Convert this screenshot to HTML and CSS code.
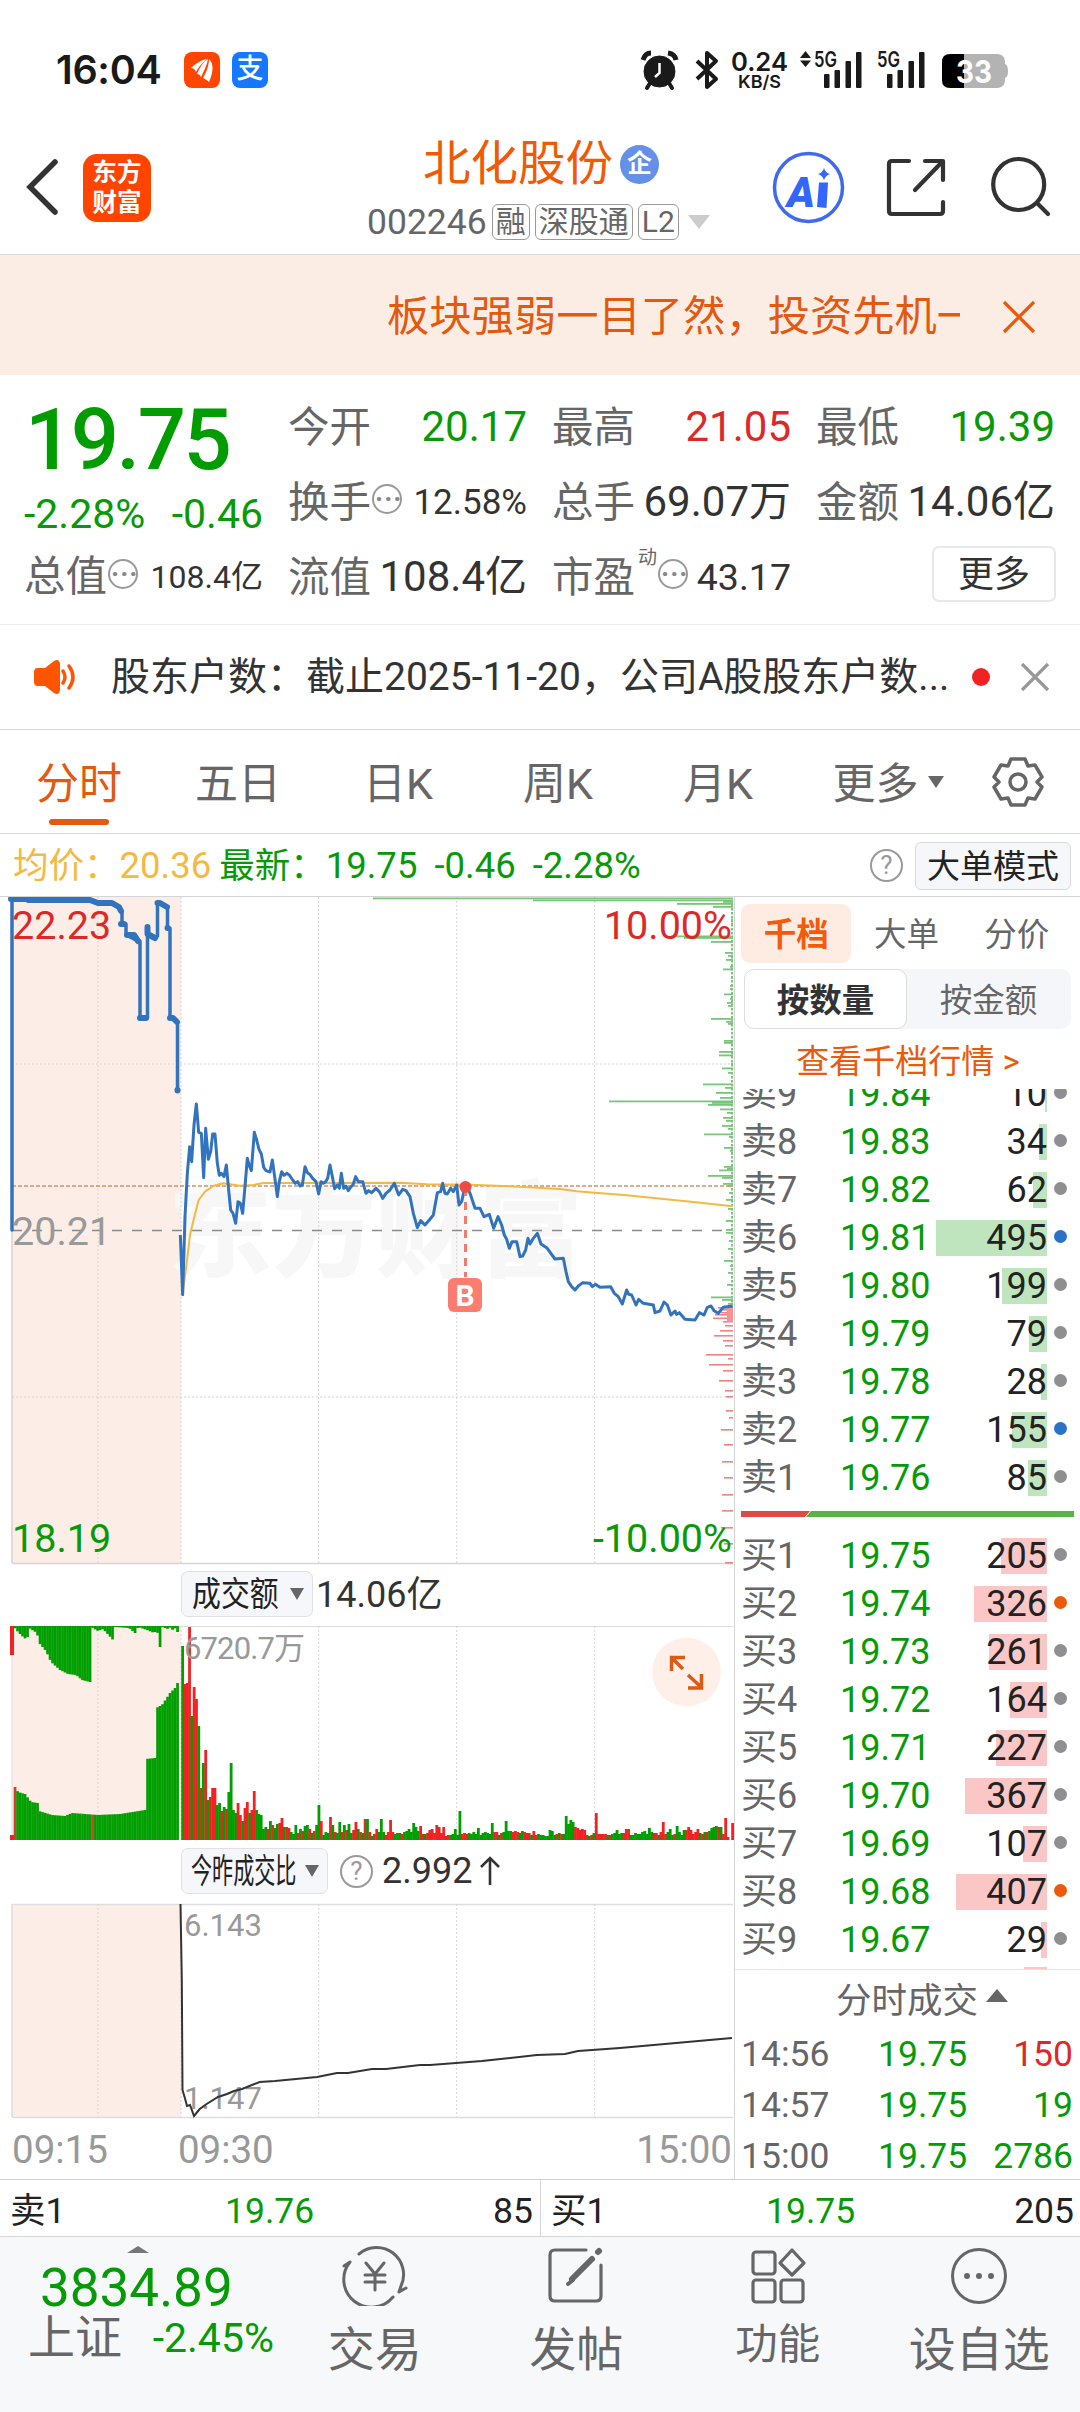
FILE: index.html
```html
<!DOCTYPE html>
<html lang="zh-CN">
<head>
    <meta charset="UTF-8">
    <meta name="viewport" content="width=device-width, initial-scale=1.0">
    <title>北化股份 002246</title>
    <link rel="stylesheet" href="styles.css">
</head>
<body>
    <div class="status">
        <span class="time">16:04</span>
        <svg class="app" width="36" height="36" viewBox="0 0 36 36"><rect width="36" height="36" rx="8" fill="#ff4500"/><g fill="#fff"><path d="M7 16C11 12 17 8 23 7C18 11 14 16 12 20C11 17 9 16 7 16Z"/><path d="M13 22C16 15 20 9 24 7C23 13 20 19 17 25C16 23 15 22 13 22Z"/><path d="M19 26C23 19 25 13 25 7C29 11 29 16 28 21C27 25 26 28 25 30C23 28 21 27 19 26Z"/></g></svg>
        <span class="pay">支</span>
        <svg class="sysicons" width="380" height="44" viewBox="636 48 380 44">
            <g fill="#1a1a1a" stroke="#1a1a1a">
                <circle cx="659.5" cy="71.500" r="15.500"/>
                <path d="M650 83L647 88M669 83L672 88" stroke-width="4" stroke-linecap="round"/>
                <path d="M643 60Q645 53 651 53M668 53Q675 54 676 60" stroke-width="5" fill="none"/>
                <path d="M659.500 63V73L655 77" stroke="#fff" stroke-width="2.500" fill="none"/>
                <path d="M697 61L716 79L707 87V53L716 61L697 79" stroke-width="4" fill="none" stroke-linejoin="round"/>
            </g>
            <g class="systext">
                <text x="731" y="71" font-size="26" textLength="57" lengthAdjust="spacingAndGlyphs">0.24</text>
                <text x="738" y="88" font-size="17.500" textLength="43" lengthAdjust="spacingAndGlyphs">KB/S</text>
                <text x="814" y="67" font-size="21" textLength="23" lengthAdjust="spacingAndGlyphs">5G</text>
                <text x="877" y="67" font-size="21" textLength="23" lengthAdjust="spacingAndGlyphs">5G</text>
            </g>
            <path d="M800 58L805.500 51L811 58ZM800 60.500H811L805.500 67Z" fill="#1a1a1a"/>
            <g fill="#1a1a1a">
                <rect x="824" y="74" width="5.500" height="14" rx="1"/><rect x="834.500" y="70" width="5.500" height="18" rx="1"/><rect x="845.500" y="61" width="5.500" height="27" rx="1"/><rect x="856" y="52" width="5.500" height="36" rx="1"/>
                <rect x="887" y="74" width="5.500" height="14" rx="1"/><rect x="897.500" y="70" width="5.500" height="18" rx="1"/><rect x="908.500" y="61" width="5.500" height="27" rx="1"/><rect x="919" y="52" width="5.500" height="36" rx="1"/>
            </g>
            <path d="M964 54H997Q1004 54 1005 61V64Q1008 65 1008 71Q1008 77 1005 78V81Q1004 88 997 88H964Z" fill="#b3b3b3"/>
            <path d="M964 54H950Q942 54 942 62V80Q942 88 950 88H964Z" fill="#000"/>
            <text x="956" y="82.500" font-size="31" textLength="36" lengthAdjust="spacingAndGlyphs" class="battery">33</text>
        </svg>
    </div>

    <div class="header">
        <svg class="back" width="34" height="60" viewBox="0 0 34 60"><path d="M30 5L5 30L30 55" fill="none" stroke="#333" stroke-width="5.500" stroke-linecap="round"/></svg>
        <div class="logo">东方<br>财富</div>
        <div class="stock">
            <div class="name">北化股份<span class="ent">企</span></div>
            <div class="code">002246<span class="tag">融</span><span class="tag">深股通</span><span class="tag">L2</span><i class="down"></i></div>
        </div>
        <svg class="tools" width="290" height="76" viewBox="770 150 290 76">
            <circle cx="808.500" cy="187.500" r="34" fill="#fff" stroke="#3f6af0" stroke-width="3.500"/>
            <text x="787" y="207" class="ai" font-size="43" textLength="28" lengthAdjust="spacingAndGlyphs">A</text>
            <path d="M819 182.500H828L826.500 208L817 207Z" fill="#3366ff"/>
            <path d="M824 168Q825.500 173 830 174Q825.500 175.500 824 180Q822.500 175.500 818 174Q822.500 173 824 168Z" fill="#3366ff"/>
            <g fill="none" stroke="#333" stroke-width="4.200" stroke-linecap="round" stroke-linejoin="round">
                <path d="M909 161H892Q889 161 889 164V211Q889 214 892 214H940Q943 214 943 211V202M925 161H943V180M942 162L915 190"/>
                <circle cx="1018.700" cy="184.500" r="25.500"/><path d="M1037 203L1048 214"/>
            </g>
        </svg>
    </div>

    <div class="notice">
        <div class="marquee">板块强弱一目了然，投资先机一目了然</div>
        <svg width="36" height="36" viewBox="0 0 36 36"><path d="M3 3L33 33M33 3L3 33" stroke="#e8590c" stroke-width="3.200"/></svg>
    </div>

    <div class="quote">
        <div class="main">
            <div class="price">19.75</div>
            <div class="change"><span>-2.28%</span><span>-0.46</span></div>
            <div class="cell"><label>总值</label><i class="dots">···</i><b class="v32">108.4亿</b></div>
        </div>
        <div class="grid">
            <div class="cell"><label>今开</label><b class="green">20.17</b></div>
            <div class="cell"><label>最高</label><b class="red">21.05</b></div>
            <div class="cell"><label>最低</label><b class="green">19.39</b></div>
            <div class="cell"><label>换手</label><i class="dots">···</i><b class="v35">12.58%</b></div>
            <div class="cell"><label>总手</label><b>69.07万</b></div>
            <div class="cell"><label>金额</label><b>14.06亿</b></div>
            <div class="cell"><label>流值</label><b>108.4亿</b></div>
            <div class="cell"><label>市盈</label><sup>动</sup><i class="dots">···</i><b class="v37">43.17</b></div>
            <div class="cell"><span class="more">更多</span></div>
        </div>
    </div>

    <div class="news">
        <svg width="46" height="36" viewBox="0 0 46 36"><path d="M6 9H13L22 2Q27 -1 28 5V31Q27 37 22 34L13 27H6Q2 27 2 23V13Q2 9 6 9Z" fill="#ff5500"/><path d="M31 12Q35 18 31 24M37 7Q45 18 37 29" fill="none" stroke="#ff5500" stroke-width="3.500" stroke-linecap="round"/></svg>
        <div class="newstext">股东户数：截止2025-11-20，公司A股股东户数...</div>
        <i class="reddot"></i>
        <svg class="close" width="32" height="32" viewBox="0 0 32 32"><path d="M3 3L29 29M29 3L3 29" stroke="#999" stroke-width="3.200"/></svg>
    </div>

    <div class="tabs">
        <span class="on">分时</span><span>五日</span><span>日K</span><span>周K</span><span>月K</span><span>更多<i></i></span>
        <svg width="54" height="54" viewBox="-27 -27 54 54"><path d="M-7 -23H7L10 -16L17 -17L24 -5L19 0L24 5L17 17L10 16L7 23H-7L-10 16L-17 17L-24 5L-19 0L-24 -5L-17 -17L-10 -16Z" fill="none" stroke="#666" stroke-width="3.500" stroke-linejoin="round"/><circle r="8" fill="none" stroke="#666" stroke-width="3.500"/></svg>
    </div>

    <div class="info">
        <span class="avg">均价：<b>20.36</b></span><span>最新：<b>19.75</b></span><span><b>-0.46</b></span><span><b>-2.28%</b></span>
        <i class="help">?</i><span class="mode">大单模式</span>
    </div>

    <div class="content">
        <div class="charts">
            <svg id="price" width="734" height="670" viewBox="0 897 734 670">
                <rect x="12" y="897" width="169" height="666" fill="#fcede6"/>
                <text x="168" y="1269" class="mark" textLength="415">东方财富</text>
                <g class="dot"><path d="M98 897V1563M181 897V1563M318.700 897V1563M456.700 897V1563M594.700 897V1563M12 1064H733M12 1397H733"/></g>
                <path d="M12 1563.500H733M12 1230V1563" stroke="#d5d5d5" stroke-width="1.500"/>
                <path d="M12 1230.500H733" stroke="#8a8a8a" stroke-width="1.500" stroke-dasharray="10 10"/>
                <g id="profile"></g>
                <path d="M12 1186H733" stroke="#d58f68" stroke-width="1.500" stroke-dasharray="4 2"/>
                <g transform="translate(0 880) scale(.33333)" fill="none" stroke-linejoin="round">
                    <polyline stroke="#f4b942" stroke-width="6" points="548,1240 560,1150 570,1065 583,1010 596,960 615,935 640,918 670,910 720,917 760,915 790,909 900,909 1200,908 1280,913 1410,914 1530,919 1680,927 1730,934 1880,946 2080,966 2198,979"/>
                    <polyline stroke="#3273bd" stroke-width="9" points="541,1065 548,1244 555,1010 562,880 569,800 575,845 582,735 589,672 596,757 604,760 611,893 617,745 625,838 632,815 638,762 645,762 652,850 658,886 664,880 672,890 679,855 686,930 692,990 699,1000 707,1030 714,965 721,970 728,1000 735,920 742,835 748,858 754,872 763,757 770,780 777,808 784,822 791,862 798,872 810,876 817,840 824,890 832,950 838,905 845,875 852,886 860,880 868,885 878,900 886,910 893,905 900,918 907,915 915,860 922,878 930,884 938,895 948,905 956,942 963,905 970,910 977,905 983,895 990,855 997,890 1004,926 1012,915 1018,925 1024,880 1031,925 1038,918 1045,932 1053,920 1059,915 1067,890 1075,905 1088,905 1098,940 1106,932 1115,938 1128,925 1138,935 1148,955 1158,940 1170,930 1183,910 1196,945 1208,928 1218,932 1230,950 1240,1000 1252,1043 1262,1022 1275,1035 1288,1020 1300,1005 1312,938 1322,935 1328,910 1335,940 1342,942 1352,925 1360,935 1370,915 1377,975 1385,965 1397,910 1410,940 1425,985 1440,985 1452,1010 1468,1003 1481,1045 1494,1010 1505,1035 1513,1065 1520,1078 1528,1105 1536,1085 1550,1085 1560,1130 1568,1128 1577,1110 1584,1075 1590,1092 1600,1075 1612,1060 1623,1092 1640,1103 1665,1137 1690,1135 1698,1175 1705,1205 1715,1220 1725,1230 1735,1218 1748,1208 1770,1210 1777,1220 1786,1213 1800,1222 1832,1220 1843,1240 1855,1250 1867,1272 1880,1230 1886,1243 1895,1245 1908,1275 1916,1258 1930,1270 1960,1275 1965,1298 1980,1293 1992,1266 2002,1275 2013,1305 2025,1293 2030,1303 2038,1298 2055,1318 2085,1320 2098,1298 2112,1305 2122,1282 2133,1278 2142,1292 2155,1300 2170,1282 2198,1278"/>
                </g>
                <g fill="none" stroke="#3273bd" stroke-linejoin="round" stroke-linecap="round">
                    <path stroke-width="3.500" d="M12 1230V899M119 907L122 911V924H126V935L138 941H140V1018H147.500V927L149 935L156 938L157.500 936V903M167.500 907V928H170V1018M177.500 1022V1090.500"/>
                    <path stroke-width="6" d="M11 899H27L28 900H90L98 903H112L119 907L121 911M121 924H124M127 935H134L138 941M140 1018H146M147.500 927V934L155 938M157.500 903H160L167 907M167.500 928V928M170 1018H173L177 1022M177.500 1090V1090.500"/>
                </g>
                <path d="M465.500 1188V1277" stroke="#ef7b6c" stroke-width="3" stroke-dasharray="8 6"/>
                <circle cx="465.500" cy="1187" r="6" fill="#ee4b42"/>
                <rect x="448" y="1278" width="34" height="34" rx="6" fill="#fa7d70"/>
                <text x="465" y="1305.500" class="flag">B</text>
                <g font-size="39.500">
                    <text x="12" y="939" fill="#dd2828">22.23</text><text x="732" y="939" fill="#dd2828" text-anchor="end">10.00%</text>
                    <text x="12" y="1245" fill="#999">20.21</text>
                    <text x="12" y="1552" fill="#079a07">18.19</text><text x="732" y="1552" fill="#079a07" text-anchor="end">-10.00%</text>
                </g>
            </svg>

            <div class="bar"><span class="select"><em class="s3">成交额</em></span><b>14.06亿</b></div>
            <svg id="volume" width="734" height="216" viewBox="0 1625 734 216">
                <rect x="12" y="1626" width="169" height="214" fill="#fcede6"/>
                <path d="M12 1626.500H733M12 1626V1840" stroke="#ddd" fill="none"/>
                <g class="dot"><path d="M98 1626V1840M181 1626V1840M318.700 1626V1840M456.700 1626V1840M594.700 1626V1840"/></g>
                <g id="bars"></g>
                <text x="184" y="1659" font-size="31" fill="#999" textLength="121">6720.7万</text>
                <circle cx="686.500" cy="1672" r="34.500" fill="#fef0e8"/>
                <path d="M671.500 1671V1657.500H685M672 1658L683 1669M688 1675L701 1687M701.500 1674V1688H688" fill="none" stroke="#dc5a14" stroke-width="3.500"/>
            </svg>
            <div class="bar ratio"><span class="select"><em class="s5">今昨成交比</em></span><i class="help">?</i><b>2.992</b><svg width="22" height="30" viewBox="0 0 22 30"><path d="M11 29V2M2 11L11 2L20 11" fill="none" stroke="#333" stroke-width="2.600"/></svg></div>
            <svg width="734" height="216" viewBox="0 1903 734 216">
                <rect x="12" y="1904" width="169" height="213" fill="#fcede6"/>
                <path d="M12 1904.500H733M12 1904V2117M12 2117.500H733" stroke="#ddd" stroke-width="1.500" fill="none"/>
                <g class="dot"><path d="M98 1904V2117M181 1904V2117M318.700 1904V2117M456.700 1904V2117M594.700 1904V2117"/></g>
                <text x="184" y="1936" font-size="31" fill="#999">6.143</text>
                <text x="184" y="2109" font-size="31" fill="#999">1.147</text>
                <polyline fill="none" stroke="#333" stroke-width="2" points="180.500,1904 181.800,1980 182.500,2090 184.600,2097 187,2106 190,2105 194,2116 199.700,2109 206.600,2104 218,2097 227,2094 234,2091 242,2089 259.600,2082 275,2081 317,2077 337,2073 348,2073 372,2069 386,2069 420,2065 430,2065 482,2061 537,2055 565,2054 578,2051 620,2048 732,2038"/>
            </svg>
            <div class="axis"><span>09:15</span><span>09:30</span><span>15:00</span></div>
        </div>

        <div class="side">
            <div class="sidetabs"><span class="on">千档</span><span>大单</span><span>分价</span></div>
            <div class="segment"><span class="on">按数量</span><span>按金额</span></div>
            <div class="link">查看千档行情 &gt;</div>
            <div class="book">
                <div id="sell"></div>
                <svg width="333" height="6" viewBox="0 0 333 6"><path d="M0 0H69L64 6H0Z" fill="#de4a45"/><path d="M70 0H333V6H65Z" fill="#58b347"/></svg>
                <div id="buy"></div>
                <i class="next"></i>
            </div>
            <div class="deals">
                <div class="dealhead">分时成交<i></i></div>
                <div class="deal"><span>14:56</span><span>19.75</span><span class="red">150</span></div>
                <div class="deal"><span>14:57</span><span>19.75</span><span>19</span></div>
                <div class="deal"><span>15:00</span><span>19.75</span><span>2786</span></div>
            </div>
        </div>
    </div>

    <div class="best">
        <div><span>卖1</span><span>19.76</span><span>85</span></div>
        <div><span>买1</span><span>19.75</span><span>205</span></div>
    </div>

    <div class="nav">
        <div class="index">
            <i></i>
            <div class="point">3834.89</div>
            <div class="row"><span>上证</span><b>-2.45%</b></div>
        </div>
        <div class="item">
            <svg width="68" height="60" viewBox="-34 -30 68 60"><g fill="none" stroke="#666" stroke-width="3" stroke-linecap="round" stroke-linejoin="round"><path d="M-16 -22A27 27 0 0 1 26 10L24 16M31 12L24 16M18 21A27 27 0 0 1 -25 -14L-31 -10"/><path d="M-9 -13L0 -2L9 -13M0 -2V14M-10 -1H10M-10 6H10"/></g></svg>
            <span>交易</span>
        </div>
        <div class="item">
            <svg width="60" height="60" viewBox="-30 -30 60 60"><g fill="none" stroke="#666" stroke-width="3.200" stroke-linecap="round"><path d="M10 -26H-21Q-26 -26 -26 -21V20Q-26 25 -21 25H20Q25 25 25 20V-11"/><path d="M16 -17L-4 3" stroke-width="6"/><path d="M-8 8L-3 4" stroke-width="4"/><path d="M22 -24L23 -25" stroke-width="6"/></g></svg>
            <span>发帖</span>
        </div>
        <div class="item func">
            <svg width="60" height="60" viewBox="-30 -30 60 60"><g fill="none" stroke="#666" stroke-width="3.200" stroke-linejoin="round"><rect x="-25" y="-24" width="22" height="22" rx="3"/><rect x="-25" y="4" width="22" height="22" rx="3"/><rect x="3" y="4" width="22" height="22" rx="3"/><path d="M14 -26L26 -13L14 -1L2 -13Z"/></g></svg>
            <span>功能</span>
        </div>
        <div class="item">
            <svg width="60" height="60" viewBox="-30 -30 60 60"><circle r="26.500" fill="none" stroke="#666" stroke-width="3"/><g fill="#666"><circle cx="-12" r="3"/><circle r="3"/><circle cx="12" r="3"/></g></svg>
            <span>设自选</span>
        </div>
    </div>
    <script src="chart.js"></script>
</body>
</html>
```
FILE: styles.css
```css
body{
    margin: 0;
    padding: 0;

    width: 1080px;
    height: 2412px;
    overflow: hidden;

    background-color: #fff;
    color: #333;

    font-family: Roboto, 'Noto Sans CJK SC', sans-serif;
    line-height: 1.2;
}

div, span{
    box-sizing: border-box;
}
svg{
    display: block;
    flex: none;
}
b{
    font-weight: inherit;
}
i, em{
    font-style: normal;
}

.green{ color: #079a07; }
.red{ color: #dd2828; }

/* 状态栏 */
.status{
    display: flex;
    align-items: center;
    height: 124px;
    padding: 16px 0 0 56px;
}
.time{
    width: 128px;
    font: 600 39.5px/44px Inter, sans-serif;
    color: #1a1a1a;
    letter-spacing: -0.3px;
}
.pay{
    width: 36px;
    height: 36px;
    margin-left: 12px;
    border-radius: 8px;
    background: #1677ff;
    color: #fff;
    font-size: 27px;
    font-weight: 500;
    line-height: 35px;
    text-align: center;
}
.sysicons{
    margin-left: 368px;
}
.systext{
    fill: #1a1a1a;
    font-family: Inter, sans-serif;
    font-weight: 600;
}
.battery{
    fill: #fff;
    font-family: Inter, sans-serif;
    font-weight: 700;
}

/* 标题 */
.header{
    display: flex;
    height: 131px;
    border-bottom: 1px solid #d9d9d9;
    padding-left: 25px;
}
.back{
    margin-top: 33px;
}
.logo{
    width: 68px;
    height: 68px;
    margin: 30px 0 0 24px;
    padding-top: 4px;
    border-radius: 14px;
    background: #ff4400;
    color: #fff;
    font-size: 24.5px;
    font-weight: 700;
    line-height: 30px;
    text-align: center;
}
.stock{
    width: 418px;
    margin-left: 191px;
    flex: none;
    padding-left: 25px;
}
.name{
    display: flex;
    align-items: center;
    height: 78px;
    padding: 2px 0 0 56px;
    color: #f05a05;
    font-size: 47.5px;
    line-height: 80px;
}
.ent{
    width: 39px;
    height: 39px;
    margin-left: 7px;
    border-radius: 50%;
    background: #6590e8;
    color: #fff;
    font-size: 25px;
    font-weight: 700;
    line-height: 38px;
    text-align: center;
}
.code{
    display: flex;
    align-items: center;
    gap: 5px;
    height: 40px;
    color: #666;
    font-size: 35.500px;
}
.tag{
    height: 36px;
    padding: 0 3px;
    border: 1.500px solid #999;
    border-radius: 6px;
    font-size: 30px;
    line-height: 34px;
}
.down{
    margin-left: 4px;
    border: 11px solid transparent;
    border-top: 14px solid #ccc;
    border-bottom: 0;
}
.tools{
    margin: 26px 0 0 10px;
}
.ai{
    fill: #3366ff;
    font-weight: 900;
    font-style: italic;
}

.notice{
    display: flex;
    align-items: center;
    height: 120px;
    padding: 3px 0 0 387px;
    background: #fcede4;
}
.marquee{
    width: 573px;
    margin-right: 41px;
    overflow: hidden;
    white-space: nowrap;
    color: #e2590f;
    font-size: 42.300px;
    line-height: 62px;
}

/* 报价 */
.quote{
    display: flex;
    gap: 26px;
    height: 250px;
    padding: 15px 24px 0 25px;
    border-bottom: 1px solid #ececec;
}
.main{
    width: 238px;
    padding-top: 4px;
}
.price{
    height: 88px;
    padding-left: 0;
    color: #009c00;
    font-size: 85px;
    font-weight: 500;
    line-height: 92px;
    letter-spacing: -2.500px;
}
.change{
    display: flex;
    justify-content: space-between;
    height: 61px;
    margin-left: -1px;
    color: #079a07;
    font-size: 41px;
    line-height: 65px;
}
.main .cell{
    height: 68px;
}
.grid{
    display: grid;
    grid-template-columns: repeat(3, 238px);
    grid-template-rows: repeat(3, 75px);
    column-gap: 26px;
}
.cell{
    display: flex;
    align-items: center;
    white-space: nowrap;
    font-size: 42px;
}
.cell label{
    margin-left: -1px;
    color: #666;
    font-size: 41.500px;
}
.cell b{
    margin-left: auto;
}
.cell .v32{ font-size: 32px; }
.cell .v35{ font-size: 35px; }
.cell .v37{ font-size: 37.500px; }
.cell sup{
    align-self: flex-start;
    margin-top: 5px;
    margin-left: 3px;
    color: #666;
    font-size: 19px;
    line-height: 26px;
}
.dots{
    box-sizing: border-box;
    width: 30px;
    height: 30px;
    margin: -7px 0 0 1px;
    border: 2px solid #999;
    border-radius: 50%;
    color: #888;
    font-size: 27px;
    font-weight: 700;
    line-height: 26px;
    letter-spacing: 1px;
    text-indent: 1px;
    text-align: center;
}
.more{
    width: 124px;
    height: 56px;
    margin: -8px -1px 0 auto;
    border: 2px solid #e6e8ea;
    border-radius: 7px;
    font-size: 36px;
    line-height: 54px;
    text-align: center;
}

.news{
    display: flex;
    align-items: center;
    height: 105px;
    padding-left: 32px;
    border-bottom: 1px solid #d5d5d5;
}
.newstext{
    width: 860px;
    padding-left: 33px;
    font-size: 39px;
    white-space: nowrap;
}
.reddot{
    width: 18px;
    height: 18px;
    margin-left: 34px;
    border-radius: 50%;
    background: #f32222;
}
.close{
    margin-left: 29px;
}

/* 周期切换 */
.tabs{
    display: flex;
    align-items: center;
    height: 104px;
    border-bottom: 1px solid #d9d9d9;
    color: #666;
    font-size: 43px;
}
.tabs span{
    width: 160px;
    height: 103px;
    line-height: 108px;
    text-align: center;
}
.tabs span:nth-child(6){
    width: 180px;
}
.tabs .on{
    position: relative;
    width: 158px;
    color: #e2590f;
}
.tabs .on::after{
    content: '';
    position: absolute;
    left: 49px;
    bottom: 8px;
    width: 60px;
    height: 6px;
    border-radius: 3px;
    background: #e2590f;
}
.tabs span i{
    display: inline-block;
    margin: 0 0 11px 9px;
    border: 8px solid transparent;
    border-top: 12px solid #666;
    border-bottom: 0;
}
.tabs svg{
    margin-left: 13px;
}

.info{
    display: flex;
    align-items: center;
    height: 63px;
    padding: 1px 9px 0 13px;
    border-bottom: 1px solid #d5d5d5;
    color: #079a07;
    font-size: 35.500px;
    white-space: nowrap;
}
.info span{
    margin-right: 17px;
}
.info b{
    font-size: 36.500px;
}
.info .avg{
    margin-right: 8px;
    color: #f4b942;
}
.help{
    box-sizing: border-box;
    width: 33px;
    height: 33px;
    border: 2.500px solid #999;
    border-radius: 50%;
    color: #999;
    font-size: 26px;
    line-height: 29px;
    text-align: center;
}
.info .help{
    margin-left: auto;
}
.info .mode{
    width: 156px;
    height: 48px;
    margin: 0 0 0 12px;
    border: 1px solid #d8dade;
    border-radius: 6px;
    background: #f6f7fa;
    color: #222;
    font-size: 33px;
    line-height: 48px;
    text-align: center;
}

/* 图表 */
.content{
    display: flex;
    height: 1283px;
    border-bottom: 1px solid #d0d0d0;
}
.charts{
    width: 735px;
    border-right: 1.500px solid #d5d5d5;
}
.dot{
    fill: none;
    stroke: #d8d4d2;
    stroke-width: 1;
    stroke-dasharray: 2 2;
}
.mark{
    fill: #f7f7f7;
    font-size: 104px;
    font-weight: 900;
}
.flag{
    fill: #fff;
    font-size: 30px;
    font-weight: 700;
    text-anchor: middle;
}
.bar{
    display: flex;
    align-items: center;
    height: 58px;
    padding: 0 0 4px 181px;
    font-size: 36px;
}
.bar b{
    margin: 3px 0 0 3px;
}
.select{
    display: flex;
    align-items: center;
    justify-content: space-between;
    width: 132px;
    height: 46px;
    padding: 0 8px 0 10px;
    border: 1px solid #dfe1e6;
    border-radius: 7px;
    background: #f6f7fa;
    color: #222;
    white-space: nowrap;
}
.select::after{
    content: '';
    border: 7.500px solid transparent;
    border-top: 12px solid #666;
    border-bottom: 0;
}
.select em{
    font-size: 34px;
    line-height: 47px;
    transform-origin: left;
}
.s3{
    width: 86px;
    transform: scaleX(.85);
}
.s5{
    width: 104px;
    transform: scaleX(.62);
}
.ratio{
    height: 62px;
    padding-bottom: 2px;
}
.ratio .select{
    width: 147px;
    padding-left: 9px;
}
.ratio .help{
    margin-left: 12px;
}
.ratio b{
    margin: 2px 7px 0 9px;
}
.axis{
    display: flex;
    height: 60px;
    padding: 0 2px 0 12px;
    color: #999;
    font-size: 38.500px;
    line-height: 62px;
}
.axis span:nth-child(2){
    margin: 0 auto 0 70px;
}

/* 盘口 */
.side{
    flex: 1;
    min-width: 0;
}
.sidetabs{
    display: flex;
    height: 66px;
    padding: 7px 8px 0 6px;
    color: #666;
    font-size: 32.500px;
    line-height: 62px;
    text-align: center;
}
.sidetabs span{
    width: 111px;
    height: 59px;
}
.sidetabs .on{
    border-radius: 9px;
    background: #feece3;
    color: #f5590a;
    font-weight: 700;
}
.segment{
    display: flex;
    width: 327px;
    height: 60px;
    margin: 6px 0 0 9px;
    border-radius: 10px;
    background: #f5f6fa;
    color: #666;
    font-size: 32.500px;
    line-height: 65px;
    text-align: center;
}
.segment span{
    width: 163px;
}
.segment .on{
    border: 1.500px solid #dcdde0;
    border-radius: 10px;
    background: #fff;
    color: #333;
    font-weight: 700;
    line-height: 62px;
}
.link{
    height: 60px;
    padding-left: 1px;
    color: #ea5a0c;
    font-size: 33px;
    line-height: 66px;
    text-align: center;
}
.book{
    height: 881px;
    overflow: hidden;
    border-bottom: 1px solid #e3e3e3;
}
#sell{
    margin-top: -22px;
    height: 432px;
}
.book svg{
    margin: 12px 0 12px 6px;
}
.level{
    display: grid;
    grid-template-columns: 99px 90px 117px 7px 13px;
    align-items: center;
    height: 48px;
    padding-left: 6px;
    font-size: 36px;
    line-height: 54px;
}
.level .label{
    color: #666;
}
.level .price2{
    color: #079a07;
}
.level .num{
    grid-column: 3;
    grid-row: 1;
    z-index: 1;
    color: #222;
    text-align: right;
}
.level .fill{
    grid-column: 3;
    grid-row: 1;
    justify-self: end;
    height: 36px;
    background: #bfe5be;
}
#buy .fill{
    background: #fac6c6;
}
.level .mark2{
    grid-column: 5;
    width: 13px;
    height: 13px;
    margin-top: -4px;
    border-radius: 50%;
    background: #8e8e93;
}
.level .mark2.blue{ background: #2b72c4; }
.level .mark2.orange{ background: #ea5a0c; }
.next{
    display: block;
    width: 23px;
    height: 8px;
    margin: 6px 0 0 289px;
    background: #fac6c6;
}

.dealhead{
    height: 59px;
    padding-left: 101px;
    color: #666;
    font-size: 35.500px;
    line-height: 62px;
}
.dealhead i{
    display: inline-block;
    margin: 0 0 11px 8px;
    border: 11px solid transparent;
    border-bottom: 13px solid #666;
    border-top: 0;
}
.deal{
    display: grid;
    grid-template-columns: 137px 99px 96px;
    height: 51px;
    padding-left: 6px;
    color: #079a07;
    font-size: 35.500px;
    line-height: 51px;
}
.deal span:first-child{
    color: #666;
}
.deal span:last-child{
    text-align: right;
}
.deal .red{
    color: #dd2828;
}

.best{
    display: flex;
    height: 57px;
    border-bottom: 1px solid #d5d5d5;
    font-size: 35.500px;
    line-height: 62px;
}
.best div{
    display: grid;
    grid-template-columns: 215px 1fr auto;
    width: 540px;
    padding: 0 7px 0 10px;
    color: #222;
}
.best div + div{
    border-left: 1px solid #d5d5d5;
    padding: 0 6px 0 10px;
}
.best span:nth-child(2){
    color: #079a07;
}

/* 底部导航 */
.nav{
    display: flex;
    height: 175px;
    background: #f7f8fa;
    color: #666;
}
.index{
    width: 274px;
    padding-top: 9px;
}
.index i{
    display: block;
    width: 0;
    margin-left: 127px;
    border: 11px solid transparent;
    border-bottom: 7px solid #777;
    border-top: 0;
}
.point{
    height: 62px;
    padding-left: 40px;
    color: #079a07;
    font-size: 53px;
    line-height: 70px;
}
.row{
    display: flex;
    justify-content: space-between;
    padding: 0 0 0 28px;
    margin-top: -5px;
    font-size: 47px;
    line-height: 56px;
}
.row b{
    color: #079a07;
    font-size: 41px;
}
.item{
    display: flex;
    flex-direction: column;
    align-items: center;
    width: 201.500px;
    padding-top: 9px;
    font-size: 47px;
}
.item span{
    margin-top: 14px;
    line-height: 60px;
}
.item.func span{
    margin-top: 12px;
    font-size: 42.500px;
    line-height: 54px;
}
```
FILE: chart.js
```js
const GREEN = '#009f00';
const RED = '#f22222';

function rects(list, id){
    document.getElementById(id).innerHTML = list.map(r =>
        `<rect x="${r[0]}" y="${r[1]}" width="${r[2]}" height="${r[3]}" fill="${r[4]}"/>`).join('');
}

// 成交额，负数为绿柱
const volume = [-194,156,157,213,-124,153,141,-114,52,-77,90,-40,43,52,52,-35,-37,29,-33,31,-48,-77,-30,-27,37,25,-19,32,38,-27,
    30,49,-30,-26,-25,-11,-13,11,-19,15,-12,-16,17,22,-13,13,12,-8,-6,-15,7,-11,9,-14,-15,11,-7,9,-15,-35,
    19,-5,-8,-7,23,-15,8,-7,-18,8,-15,10,-16,-7,10,18,-11,8,-7,21,-21,8,-4,6,11,-8,-21,-8,5,8,
    20,8,-6,-7,-7,6,-8,-9,-11,-8,-17,-13,-9,14,6,-6,7,10,11,7,15,13,7,13,4,5,-5,-6,-11,-5,-29,
    6,7,6,-7,-6,-8,-6,-12,-5,-7,-8,-7,-6,-17,8,8,-5,7,-8,-19,-9,-9,8,9,8,-7,-9,8,7,7,
    -5,9,5,-6,-5,-5,-4,-4,-10,-9,-5,6,-7,6,-6,-24,-16,-20,-18,13,12,10,11,10,5,-4,5,-7,27,6,
    6,6,6,-5,5,-6,-7,-10,-6,-7,7,11,11,-5,-5,-7,-6,-6,-8,-9,-6,-12,-8,7,7,-5,8,18,6,-8,
    -11,-5,6,-14,-8,-5,-10,10,13,10,6,8,11,-7,6,-8,8,-9,-12,-13,-14,13,-13,6,22,3,0,17];

// 集合竞价关键点 [x, 高度]
const auctionUp = [[15,53],[18,48],[25,46],[31,38],[38,37],[39,29],[52,25],[65,24],[72,27],[98,25],[120,26],[145,30],[146,81],[155,82],[156,132],[162,135],[170,147],[175,152],[177,157],[178,157],[179,109]];
const auctionDown = [[14,1],[18,6],[22,10],[27,14],[29,2],[37,7],[39,17],[46,25],[51,36],[60,44],[68,48],[76,49],[82,54],[90,56],[91,1],[98,5],[103,3],[113,14],[115,1],[129,2],[135,7],[138,1],[147,4],[154,7],[157,4],[160,21],[162,1],[168,3],[169,0],[172,5],[174,0],[177,7],[180,1]];

function at(points, x){
    for(let i = 1; i < points.length; i++){
        const [x0, y0] = points[i - 1];
        const [x1, y1] = points[i];
        if(x <= x1){
            return y0 + (y1 - y0) * Math.max(0, x - x0) / (x1 - x0);
        }
    }
    return 0;
}

const bars = [];
for(let x = 15; x < 180; x += 2.5){
    const up = at(auctionUp, x);
    const down = at(auctionDown, x);
    const c = x == 15 || x == 92.5 ? '#d2402a' : GREEN;
    bars.push([x - 1.3, 1840 - up, 2.7, up, c]);
    bars.push([x - 1.3, 1626, 2.7, down, GREEN]);
}
bars.push([10, 1626, 4, 29, RED], [10, 1835, 4, 5, RED]);
volume.forEach((v, i) => {
    const h = Math.abs(v);
    bars.push([181.2 + i * (550 / (volume.length - 1)), 1840 - h, 2.8, h, v < 0 ? GREEN : RED]);
});
rects(bars, 'bars');

// 右侧分价量 [y, 长度]
const sells = [[897.5,360],[899.5,200],[901,10],[903,56],[906,20],[919,2],[923,2],[935.5,62],[937,49],[941,22],[952,8],[955,5],[959,7],[966,3],[968.5,10],[977,2],[985,3],[988,3],[993.5,9],[998,3],[1002,6],[1005,5],[1018,22],[1021,7],[1023,5],[1040,9],[1042,9],[1051,14],[1054.500,14],[1063,2],[1067.500,11],[1072,5],[1083.500,30],[1087,8],[1092,17],[1097,13],[1100.500,124],[1102,21],[1104,25],[1108.500,13],[1112,6],[1117,10],[1120,7],[1125,11],[1128,5],[1133.500,29],[1136,4],[1147,9],[1150,3],[1153,2],[1166,9],[1168,6],[1169.500,14],[1175,25],[1177,11],[1183,10],[1185,5],[1192,4],[1199,7],[1208,5],[1220,7],[1229,7],[1232,7],[1240,4],[1248,5],[1260,9],[1265,3],[1272,5],[1284,6],[1296.500,22],[1299,11],[1303,5]];
const buys = [[1307,15],[1309,10],[1312,12],[1314,18],[1317.500,20],[1321,10],[1325,8],[1330,13],[1335,19],[1340,10],[1345,8],[1354,27],[1358,5],[1364,24],[1370,10],[1380,14],[1390,8],[1396,7],[1410,7],[1417,4],[1429,12],[1444,9],[1461,11],[1477,9],[1494,11],[1510,11],[1527,12],[1543,9],[1562,8]];
const profile = [];
sells.forEach(([y, w]) => profile.push([733 - w, y, w, 1.8, '#79c57a']));
buys.forEach(([y, w]) => profile.push([733 - w, y, w, 1.6, '#ee8484']));
for(let y = 900; y < 1304; y += 4){
    profile.push([731, y, 2, 2.5, '#79c57a']);
}
profile.push([727, 1306, 6, 16, '#f29494']);
rects(profile, 'profile');

// 五档明细 [名称, 价格, 数量, 标记]
const sell = [['卖9', '19.84', 10], ['卖8', '19.83', 34], ['卖7', '19.82', 62], ['卖6', '19.81', 495, 'blue'], ['卖5', '19.80', 199],
    ['卖4', '19.79', 79], ['卖3', '19.78', 28], ['卖2', '19.77', 155, 'blue'], ['卖1', '19.76', 85]];
const buy = [['买1', '19.75', 205], ['买2', '19.74', 326, 'orange'], ['买3', '19.73', 261], ['买4', '19.72', 164], ['买5', '19.71', 227],
    ['买6', '19.70', 367], ['买7', '19.69', 107], ['买8', '19.68', 407, 'orange'], ['买9', '19.67', 29]];

function levels(list, id){
    document.getElementById(id).innerHTML = list.map(([label, price, num, mark]) =>
        `<div class="level"><span class="label">${label}</span><span class="price2">${price}</span>` +
        `<span class="fill" style="width:${(num * 0.2242).toFixed(1)}px"></span><span class="num">${num}</span>` +
        `<i class="mark2 ${mark || ''}"></i></div>`).join('');
}
levels(sell, 'sell');
levels(buy, 'buy');
```
